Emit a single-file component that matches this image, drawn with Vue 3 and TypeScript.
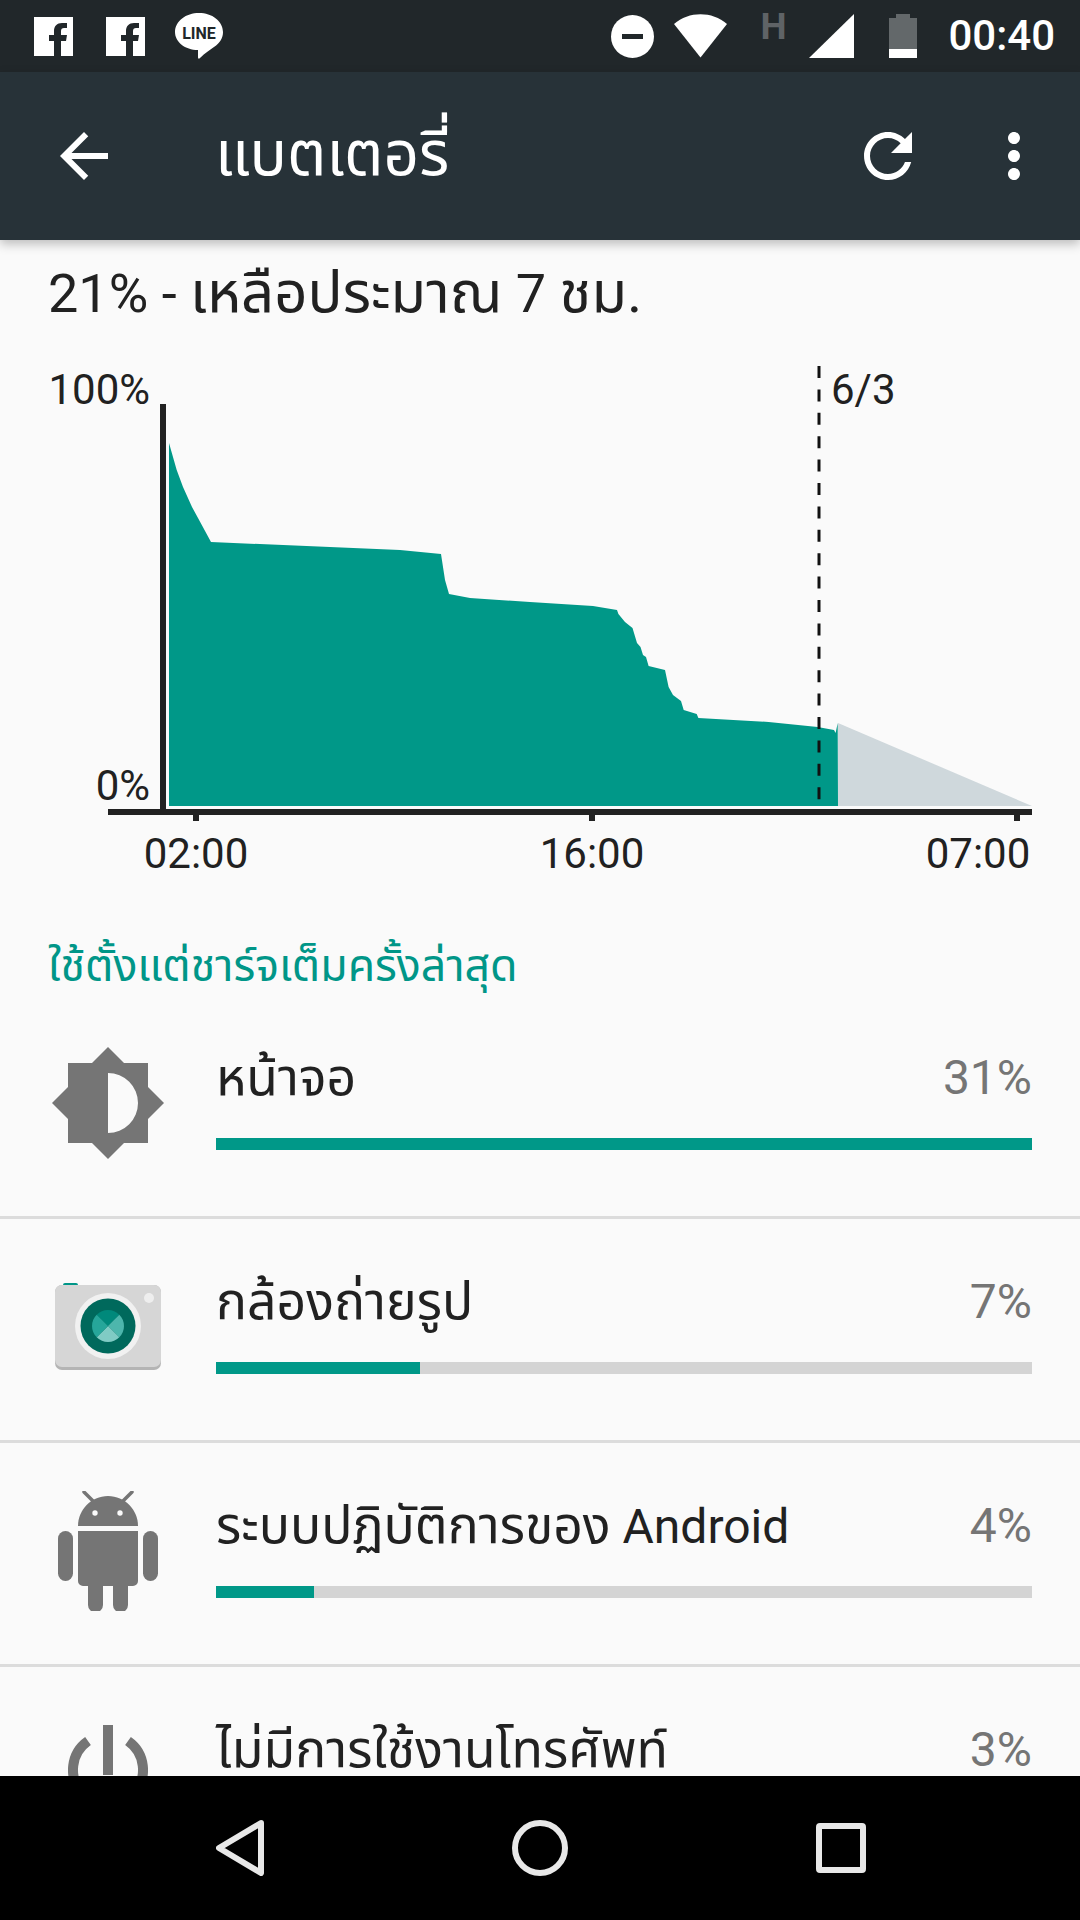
<script setup lang="ts">
interface Row { key: string; title: string; latin?: string; pct: string; fill: number }
const rows: Row[] = [
  { key: 'screen', title: 'หน้าจอ', pct: '31%', fill: 100 },
  { key: 'camera', title: 'กล้องถ่ายรูป', pct: '7%', fill: 25 },
  { key: 'android', title: 'ระบบปฏิบัติการของ', latin: ' Android', pct: '4%', fill: 12 },
  { key: 'idle', title: 'ไม่มีการใช้งานโทรศัพท์', pct: '3%', fill: 10 },
]
const usage = '169,806 169,443 176.7,470 183,487 192,507 198,518 211,542 400,550 441,554 445,580 449,594 470,598 530,602 593,606 617,610 618.4,614 625,622 632.5,628 637,643 640.5,647 643,655 646,657 648.6,666 665,670 668.6,687 673,695 681,701 683.7,710 696.7,714 698.4,718 768.6,722 817.7,727 834,730 835.6,733 837.7,723 838,806'
</script>

<template>
  <div class="phone">
    <header class="status">
      <div class="status-left">
        <svg class="ic" width="39" height="39" viewBox="0 0 39 39"><rect width="39" height="39" fill="#fff" /><path d="M27 39V24h5l1-6h-6v-4c0-2 1-3 3-3h3V6h-5c-5 0-8 3-8 8v4h-5v6h5v15z" fill="#21272a" /></svg>
        <svg class="ic fb2" width="39" height="39" viewBox="0 0 39 39"><rect width="39" height="39" fill="#fff" /><path d="M27 39V24h5l1-6h-6v-4c0-2 1-3 3-3h3V6h-5c-5 0-8 3-8 8v4h-5v6h5v15z" fill="#21272a" /></svg>
        <svg class="ic line" width="48" height="46" viewBox="0 0 48 46"><path d="M24 0c13 0 24 8 24 19 0 6-3 11-9 15-4 3-9 6-14 11-1 1-2 1-2-1v-7C10 37 0 29 0 19 0 8 11 0 24 0z" fill="#fff" /><text x="24" y="26" text-anchor="middle" class="line-t">LINE</text></svg>
      </div>
      <div class="status-right">
        <svg class="dnd" width="43" height="43" viewBox="0 0 43 43"><circle cx="21.5" cy="21.5" r="21.5" fill="#fff" /><rect x="11" y="19" width="21" height="5" fill="#21272a" /></svg>
        <svg class="wifi" width="53" height="44" viewBox="0 0 53 44"><path d="M26.500 43.500 0 10C15-3 38-3 53 10z" fill="#fff" /></svg>
        <span class="h">H</span>
        <svg class="signal" width="45" height="44" viewBox="0 0 45 44"><path d="M0 44 45 0v44z" fill="#fff" /></svg>
        <svg class="batt" width="28" height="44" viewBox="0 0 28 44"><path d="M7 0h14v4h7v40H0V4h7z" fill="#63686a" /><rect y="35" width="28" height="9" fill="#fff" /></svg>
        <span class="time">00:40</span>
      </div>
    </header>

    <div class="toolbar">
      <svg class="tb-ic" width="72" height="72" viewBox="0 0 24 24"><path d="M20 11H7.830l5.590-5.590L12 4l-8 8 8 8 1.410-1.410L7.830 13H20v-2z" fill="#fff" /></svg>
      <h1 class="title">แบตเตอรี่</h1>
      <svg class="tb-ic refresh" width="72" height="72" viewBox="0 0 24 24"><path d="M17.650 6.350C16.200 4.900 14.210 4 12 4c-4.420 0-7.990 3.580-7.990 8s3.570 8 7.990 8c3.730 0 6.840-2.550 7.730-6h-2.080c-.82 2.330-3.040 4-5.650 4-3.310 0-6-2.690-6-6s2.690-6 6-6c1.660 0 3.140.69 4.220 1.780L13 11h7V4l-2.350 2.350z" fill="#fff" /></svg>
      <svg class="tb-ic more" width="72" height="72" viewBox="0 0 24 24"><path d="M12 8c1.100 0 2-.9 2-2s-.9-2-2-2-2 .9-2 2 .9 2 2 2zm0 2c-1.100 0-2 .9-2 2s.9 2 2 2 2-.9 2-2-.9-2-2-2zm0 6c-1.100 0-2 .9-2 2s.9 2 2 2 2-.9 2-2-.9-2-2-2z" fill="#fff" /></svg>
    </div>

    <main class="content">
      <p class="summary">21% - <span class="summary-th">เหลือประมาณ</span> 7 <span class="summary-th">ชม.</span></p>

      <svg class="chart" width="1080" height="540" viewBox="0 340 1080 540">
        <polygon :points="usage" fill="#009888" />
        <polygon points="838,806 838,723 1032,806" fill="#cfd8dc" />
        <line x1="819" y1="366" x2="819" y2="806" stroke="#111" stroke-width="3" stroke-dasharray="12 11.400" />
        <rect x="160" y="404" width="6" height="405" fill="#212121" />
        <rect x="108" y="809" width="924" height="6" fill="#212121" />
        <rect x="193" y="815" width="6" height="6" fill="#212121" />
        <rect x="589" y="815" width="6" height="6" fill="#212121" />
        <rect x="1014" y="815" width="6" height="6" fill="#212121" />
        <text x="150" y="404" text-anchor="end" class="lbl">100%</text>
        <text x="150" y="800" text-anchor="end" class="lbl">0%</text>
        <text x="831" y="404" class="lbl">6/3</text>
        <text x="196" y="868" text-anchor="middle" class="lbl">02:00</text>
        <text x="592" y="868" text-anchor="middle" class="lbl">16:00</text>
        <text x="978" y="868" text-anchor="middle" class="lbl">07:00</text>
      </svg>

      <h2 class="section">ใช้ตั้งแต่ชาร์จเต็มครั้งล่าสุด</h2>

      <ul class="list">
        <li v-for="r in rows" :key="r.key" class="row">
          <div class="row-icon">
            <svg v-if="r.key === 'screen'" class="i-screen" width="112" height="112" viewBox="0 0 112 112"><path fill-rule="evenodd" d="M56 0 72 16H96V40L112 56 96 72V96H72L56 112 40 96H16V72L0 56 16 40V16H40zM56 26V86A30 30 0 0 0 56 26z" fill="#757575" /></svg>
            <svg v-else-if="r.key === 'camera'" class="i-camera" width="112" height="92" viewBox="0 0 112 92">
              <rect x="11" y="0" width="15" height="5" rx="2" fill="#009688" />
              <rect x="3" y="2" width="106" height="85" rx="7" fill="#b4b4b4" />
              <rect x="3" y="2" width="106" height="82" rx="7" fill="#d6d6d6" />
              <circle cx="56" cy="43" r="33" fill="#f1f1f1" />
              <circle cx="56" cy="43" r="27.500" fill="#00695c" />
              <path d="M56 43 44.700 31.700A16 16 0 0 1 67.300 31.700z" fill="#00897b" />
              <path d="M56 43 67.300 31.700A16 16 0 0 1 67.300 54.300z" fill="#4db6ac" />
              <path d="M56 43 67.300 54.300A16 16 0 0 1 44.700 54.300z" fill="#80cbc4" />
              <path d="M56 43 44.700 54.300A16 16 0 0 1 44.700 31.700z" fill="#26a69a" />
              <circle cx="97" cy="15" r="5" fill="#eee" />
            </svg>
            <svg v-else-if="r.key === 'android'" class="i-android" width="100" height="120" viewBox="0 0 100 120">
              <path d="M26 1 35 10M74 1 65 10" stroke="#757575" stroke-width="3.500" stroke-linecap="round" />
              <path d="M20 35C20 19 33 5 50 5s30 14 30 30z" fill="#757575" />
              <circle cx="37" cy="22" r="2.700" fill="#fafafa" />
              <circle cx="62" cy="22" r="2.700" fill="#fafafa" />
              <path d="M20 40h60v50a5 5 0 0 1-5 5H70v19a5 5 0 0 1-15 0V95H45v19a5 5 0 0 1-15 0V95h-5a5 5 0 0 1-5-5z" fill="#757575" />
              <rect x="0" y="40" width="15" height="50" rx="7.500" fill="#757575" />
              <rect x="85" y="40" width="15" height="50" rx="7.500" fill="#757575" />
            </svg>
            <svg v-else class="i-idle" width="80" height="90" viewBox="0 0 80 90"><path d="M35 0h10v50H35z" fill="#757575" /><path d="M20 16A35 35 0 1 0 60 16" fill="none" stroke="#757575" stroke-width="10" /></svg>
          </div>
          <div class="row-body">
            <div class="row-text">
              <span class="row-title"><span class="row-th">{{ r.title }}</span>{{ r.latin }}</span>
              <span class="row-pct">{{ r.pct }}</span>
            </div>
            <div class="track"><div class="fill" :style="{ width: r.fill + '%' }"></div></div>
          </div>
        </li>
      </ul>
    </main>

    <nav class="nav">
      <svg width="48" height="56" viewBox="0 0 48 56"><path d="M45 3 3 28 45 53z" fill="none" stroke="#e8e8e8" stroke-width="6" stroke-linejoin="round" /></svg>
      <svg width="56" height="56" viewBox="0 0 56 56"><circle cx="28" cy="28" r="25" fill="none" stroke="#e8e8e8" stroke-width="6" /></svg>
      <svg width="50" height="50" viewBox="0 0 50 50"><rect x="3" y="3" width="44" height="44" rx="1" fill="none" stroke="#e8e8e8" stroke-width="6" /></svg>
    </nav>
  </div>
</template>

<style scoped>
.phone {
  width: 1080px;
  height: 1920px;
  display: flex;
  flex-direction: column;
  overflow: hidden;
  background: #fafafa;
  font-family: Roboto, "Noto Sans", "Noto Sans Thai", sans-serif;
  color: #212121;
}
.status {
  height: 72px;
  flex: none;
  background: #21272a;
  display: flex;
  justify-content: space-between;
  align-items: center;
}
.status-left { display: flex; align-items: center; padding-left: 34px; }
.fb2 { margin-left: 33px; }
.line { margin-left: 30px; }
.line-t { font: 700 16px Roboto, sans-serif; fill: #21272a; }
.ic { display: block; }
.status-right { display: flex; align-items: center; padding-right: 25px; }
.status-right svg { display: block; }
.wifi { margin-left: 20px; margin-top: -1px; margin-right: -2px; }
.h {
  width: 24px;
  margin-left: 35px;
  margin-top: -20px;
  font: 700 37px/1 Roboto, sans-serif;
  color: #5f6366;
}
.signal { margin-left: 25px; }
.batt { margin-left: 35px; }
.time {
  margin-left: 31px;
  font: 500 42px/1 Roboto, sans-serif;
  color: #fff;
}
.toolbar {
  height: 168px;
  flex: none;
  background: #273238;
  display: flex;
  align-items: center;
  padding-left: 48px;
  box-shadow: 0 4px 10px rgba(0, 0, 0, 0.25);
  position: relative;
  z-index: 1;
}
.tb-ic { display: block; flex: none; }
.title {
  margin: 0 0 0 95px;
  font-size: 62px;
  font-weight: 400;
  color: #fff;
  flex: 1;
}
.more { margin-left: 54px; margin-right: 30px; }
.content {
  flex: 1;
  min-height: 0;
  overflow: hidden;
}
.summary {
  margin: 0;
  height: 100px;
  padding: 20px 0 0 48px;
  box-sizing: border-box;
  font-size: 54px;
  line-height: 64px;
  white-space: nowrap;
}
.summary-th { font-size: 58px; }
.chart { display: block; margin-top: 0; }
.lbl { font: 400 42px Roboto, sans-serif; fill: #212121; }
.section {
  margin: 0;
  height: 115px;
  box-sizing: border-box;
  padding: 58px 0 0 48px;
  font-size: 44.7px;
  font-weight: 400;
  line-height: 57px;
  color: #009688;
}
.list { list-style: none; margin: 0; padding: 0; }
.row {
  height: 224px;
  box-sizing: border-box;
  display: flex;
  border-bottom: 3px solid #dcdcdc;
}
.row-icon {
  width: 216px;
  flex: none;
  display: flex;
  justify-content: center;
  align-items: flex-start;
}
.row-icon svg { display: block; }
.i-screen { margin-top: 52px; }
.i-camera { margin-top: 64px; }
.i-android { margin-top: 48px; }
.i-idle { margin-top: 58px; }
.row-body { flex: 1; padding: 0 48px 0 0; }
.row-text {
  height: 50px;
  margin-top: 58px;
  display: flex;
  justify-content: space-between;
  align-items: center;
}
.row-title { font-size: 48px; line-height: 50px; color: #212121; white-space: pre; }
.row-th { font-size: 51.7px; line-height: 50px; }
.row-pct { font-size: 48px; line-height: 50px; color: #757575; }
.track { height: 12px; margin-top: 35px; background: #d4d4d4; }
.fill { height: 100%; background: #009888; }
.nav {
  height: 144px;
  flex: none;
  background: #000;
  position: relative;
  z-index: 1;
  display: flex;
  align-items: center;
  padding-left: 216px;
}
.nav svg { display: block; }
.nav svg:nth-child(2) { margin-left: 248px; }
.nav svg:nth-child(3) { margin-left: 248px; }
</style>
